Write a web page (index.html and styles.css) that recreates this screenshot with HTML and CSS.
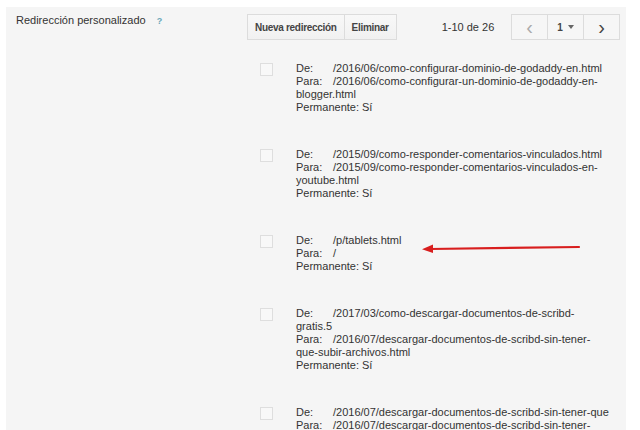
FILE: index.html
```html
<!DOCTYPE html>
<html lang="es">
<head>
    <meta charset="UTF-8">
    <title>Redirección personalizado</title>
    <link rel="stylesheet" href="styles.css">
</head>
<body>

<div class="panel">
    <div class="side">
        Redirección personalizado <span class="help">?</span>
    </div>

    <div class="main">
        <div class="toolbar">
            <div class="btn-group">
                <button class="btn">Nueva redirección</button>
                <button class="btn">Eliminar</button>
            </div>
            <div class="count">1-10 de 26</div>
            <div class="pager">
                <span class="pg prev">&lsaquo;</span>
                <span class="pg page">1 <span class="caret"></span></span>
                <span class="pg next">&rsaquo;</span>
            </div>
        </div>

        <ul class="list">
            <li class="item">
                <span class="check"></span>
                <div class="info">
                    <span class="key">De:</span>/2016/06/como-configurar-dominio-de-godaddy-en.html<br>
                    <span class="key">Para:</span>/2016/06/como-configurar-un-dominio-de-godaddy-en-blogger.html<br>
                    Permanente: Sí
                </div>
            </li>
            <li class="item">
                <span class="check"></span>
                <div class="info">
                    <span class="key">De:</span>/2015/09/como-responder-comentarios-vinculados.html<br>
                    <span class="key">Para:</span>/2015/09/como-responder-comentarios-vinculados-en-youtube.html<br>
                    Permanente: Sí
                </div>
            </li>
            <li class="item">
                <span class="check"></span>
                <div class="info">
                    <span class="key">De:</span>/p/tablets.html<br>
                    <span class="key">Para:</span>/<br>
                    Permanente: Sí
                </div>
                <!-- red arrow drawn over the screenshot -->
                <svg class="arrow" width="164" height="12" viewBox="0 0 164 12">
                    <line x1="8" y1="7" x2="157" y2="5" stroke="#d81e1e" stroke-width="2.2" stroke-linecap="round"/>
                    <polygon points="0,7.2 11,2.5 11,11" fill="#d81e1e"/>
                </svg>
            </li>
            <li class="item">
                <span class="check"></span>
                <div class="info">
                    <span class="key">De:</span>/2017/03/como-descargar-documentos-de-scribd-gratis.5<br>
                    <span class="key">Para:</span>/2016/07/descargar-documentos-de-scribd-sin-tener-que-subir-archivos.html<br>
                    Permanente: Sí
                </div>
            </li>
            <li class="item">
                <span class="check"></span>
                <div class="info">
                    <span class="key">De:</span>/2016/07/descargar-documentos-de-scribd-sin-tener-que<br>
                    <span class="key">Para:</span>/2016/07/descargar-documentos-de-scribd-sin-tener-que-subir-archivos.html<br>
                    Permanente: Sí
                </div>
            </li>
        </ul>
    </div>
</div>

</body>
</html>
```

FILE: styles.css
```css
body {
    margin: 0;
    padding: 0;
    background-color: #fff;
    font-family: "Liberation Sans", Arial, sans-serif;
    color: #333;
    overflow: hidden;
}
.panel {
    display: flex;
    margin: 7px 14px 0 6px;
    padding: 7px 6px 0 10px;
    height: 423px;
    overflow: hidden;
    background-color: #f5f5f5;
}
.side {
    width: 231px;
    font-size: 11px;
    padding-top: 0;
    color: #333;
}
.help {
    margin-left: 8px;
    font-size: 9px;
    font-weight: bold;
    color: #6aa7b8;
}
.main {
    flex: 1;
}
.toolbar {
    display: flex;
    align-items: center;
    height: 26px;
}
.btn-group {
    display: flex;
}
.btn {
    height: 26px;
    padding: 0 7px;
    border: 1px solid #dcdcdc;
    background-color: #f5f5f5;
    background-image: linear-gradient(#f8f8f8, #f1f1f1);
    font-family: "Liberation Sans", Arial, sans-serif;
    font-size: 10px;
    font-weight: bold;
    letter-spacing: -0.3px;
    color: #444;
    white-space: nowrap;
}
.btn + .btn {
    margin-left: -1px;
}
.count {
    margin-left: 45px;
    font-size: 11px;
    color: #333;
    white-space: nowrap;
}
.pager {
    display: flex;
    margin-left: auto;
    height: 24px;
    border: 1px solid #dcdcdc;
    background-color: #f6f6f6;
}
.pg {
    display: flex;
    align-items: center;
    justify-content: center;
    width: 35px;
    font-size: 20px;
    color: #444;
}
.pg.prev {
    color: #aaa;
}
.pg.page {
    border-left: 1px solid #dcdcdc;
    border-right: 1px solid #dcdcdc;
    font-size: 10px;
    font-weight: bold;
}
.caret {
    margin-left: 5px;
    border-left: 3px solid transparent;
    border-right: 3px solid transparent;
    border-top: 4px solid #666;
}
.list {
    list-style: none;
    margin: 22px 0 0 0;
    padding: 0 0 0 13px;
}
.item {
    position: relative;
    display: flex;
    margin-bottom: 34px;
}
.check {
    flex: none;
    width: 11px;
    height: 11px;
    margin-top: 1px;
    border: 1px solid #dedede;
    background-color: #f8f8f8;
}
.info {
    width: 314px;
    margin-left: 23px;
    font-size: 11px;
    line-height: 13px;
    color: #333;
}
.key {
    display: inline-block;
    width: 37px;
}
.arrow {
    position: absolute;
    left: 162px;
    top: 8px;
}
```
